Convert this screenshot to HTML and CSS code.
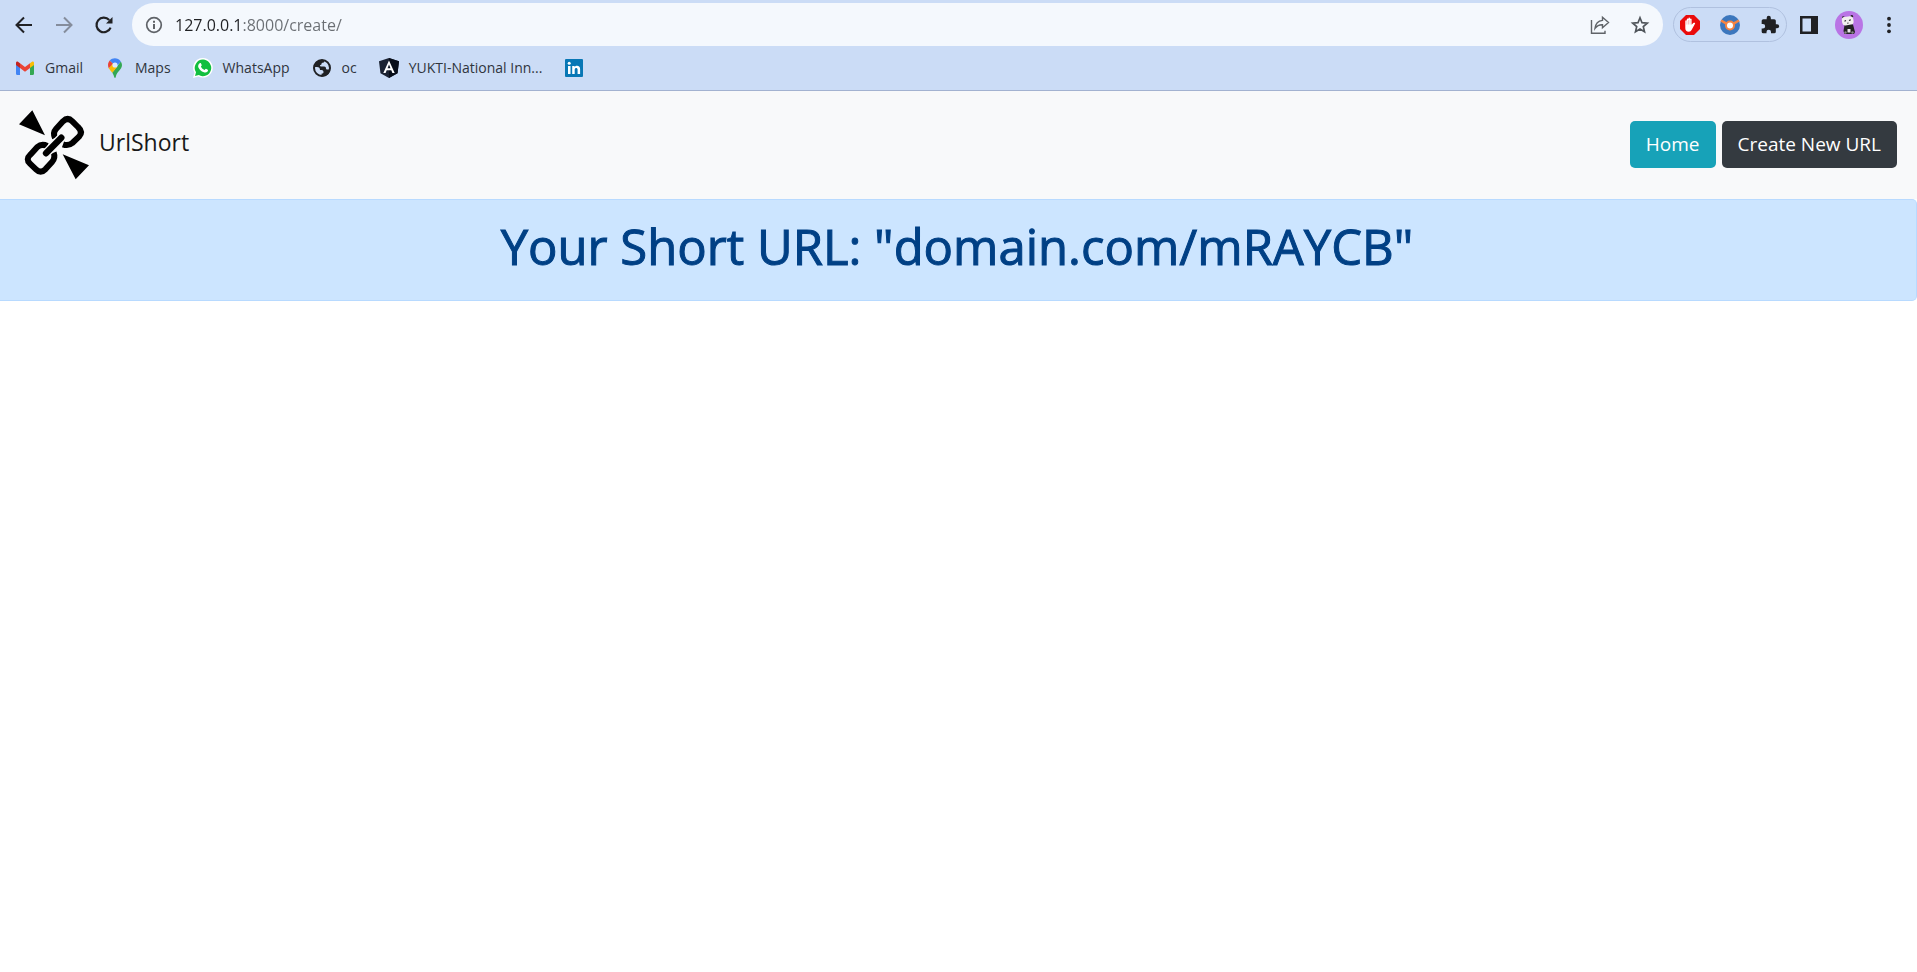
FILE: index.html
```html
<!DOCTYPE html>
<html lang="en">
<head>
<meta charset="utf-8">
<title>UrlShort</title>
<link rel="stylesheet" href="styles.css">
</head>
<body>
<header class="browser">
  <div class="toolbar">
    <div class="nav-buttons">
      <button class="icon-button" aria-label="Back"><svg width="20" height="20" viewBox="0 0 20 20"><path d="M18 10H3M10 2.500 2.500 10l7.500 7.500" fill="none" stroke="#202124" stroke-width="2"/></svg></button>
      <button class="icon-button" aria-label="Forward"><svg width="20" height="20" viewBox="0 0 20 20"><path d="M2 10h15M10 2.500l7.500 7.500-7.500 7.500" fill="none" stroke="#858d9c" stroke-width="2"/></svg></button>
      <button class="icon-button" aria-label="Reload"><svg width="20" height="20" viewBox="0 0 20 20"><path d="M16.600 12.600A7.300 7.300 0 1 1 15.200 5" fill="none" stroke="#202124" stroke-width="2.200"/><path d="M18.500 2v6.500H12z" fill="#202124"/></svg></button>
    </div>
    <div class="address">
      <svg width="18" height="18" viewBox="0 0 18 18"><circle cx="9" cy="9" r="7.300" fill="none" stroke="#5f6368" stroke-width="1.700"/><path d="M8 8h2v5H8zM8 4.700h2v2H8z" fill="#5f6368"/></svg>
      <input class="address-input" type="text" value="127.0.0.1:8000/create/" aria-label="Address">
      <button class="icon-button" aria-label="Share"><svg width="20" height="20" viewBox="0 0 20 20"><path d="M1.500 5v13.300H15v-2.500M12.500 2.200 18.500 7.500l-6 5.300V9.700c-3.500-.2-5.500 1-7.500 3.700.5-4.500 3-7.500 7.500-8z" fill="none" stroke="#5f6368" stroke-width="1.400"/></svg></button>
      <button class="icon-button" aria-label="Bookmark this page"><svg width="20" height="20" viewBox="0 0 20 20"><path d="m10 2.800 2 4.900 5.300.4-4 3.500 1.200 5.200-4.500-2.800-4.500 2.800 1.200-5.200-4-3.500 5.300-.4z" fill="none" stroke="#50555b" stroke-width="1.700"/></svg></button>
    </div>
    <div class="extensions">
      <button class="icon-button" aria-label="Ad blocker"><svg width="20" height="20" viewBox="0 0 20 20"><path d="M6 0h8l6 6v8l-6 6H6l-6-6V6z" fill="#ea0b0b"/><path d="M5.300 10.500V6c0-1.100 1.500-1.100 1.500 0V4.200c0-1.100 1.600-1.100 1.600 0V3.400c0-1.100 1.600-1.100 1.600 0v.9c0-1.100 1.600-1.100 1.600 0v5.500l1.700-1.700c1-.9 2.300-.2 1.700.7l-3.300 6c-.6 1.300-1.500 1.900-2.900 1.900-2.300 0-3.500-1.400-3.500-3.400z" fill="#fff"/><path d="M6.900 6v3.600M8.500 5v4.500M10.100 5v4.500" stroke="#f06a6a" stroke-width=".4"/></svg></button>
      <button class="icon-button" aria-label="Extension"><svg width="20" height="20" viewBox="0 0 20 20"><circle cx="10" cy="10" r="10" fill="#3c77bd"/><path d="M1 5.500 6.500 8.700M19 5.500l-5.500 3.200" stroke="#f58442" stroke-width="2.600"/><circle cx="10" cy="10.500" r="4" fill="#fff" stroke="#f58442" stroke-width="2"/></svg></button>
      <button class="icon-button" aria-label="Extensions"><svg width="20" height="20" viewBox="0 0 24 24"><path d="M20.500 11H19V7a2 2 0 0 0-2-2h-4V3.500a2.500 2.500 0 0 0-5 0V5H4a2 2 0 0 0-2 2v3.800h1.500a2.700 2.700 0 0 1 0 5.400H2V20a2 2 0 0 0 2 2h3.800v-1.500a2.700 2.700 0 0 1 5.400 0V22H17a2 2 0 0 0 2-2v-4h1.500a2.500 2.500 0 0 0 0-5z" fill="#202124"/></svg></button>
    </div>
    <div class="profile-tools">
      <button class="icon-button" aria-label="Side panel"><svg width="20" height="20" viewBox="0 0 20 20"><path d="M1 1h18v18H1zM3.500 3.500v13H12v-13z" fill="#202124" fill-rule="evenodd"/></svg></button>
      <button class="icon-button" aria-label="Profile"><svg width="28" height="28" viewBox="0 0 28 28"><circle cx="14" cy="14" r="14" fill="#b974e5"/><g fill="#222"><circle cx="8.300" cy="6.500" r="1.300"/><circle cx="16.800" cy="5.300" r="1.300"/><path d="M9.500 14q4.500-2 8.500-.5L20 21l-1 2H9.500L8.500 20z"/></g><rect x="7" y="5.500" width="11.500" height="8.500" rx="3" fill="#f2f0ef" transform="rotate(-8 13 10)"/><path d="M12.500 18h3v3.500h-3z" fill="#e9e5ec"/><path d="M9.500 10.200l1.500-.7M14 9.500l1.800-.8M12.300 12.200l1.200-.2" stroke="#222" stroke-width="1.100"/><circle cx="10.500" cy="21.500" r="1.200" fill="#888"/><circle cx="17.500" cy="21.500" r="1.200" fill="#888"/></svg></button>
      <button class="icon-button" aria-label="Menu"><svg width="20" height="20" viewBox="0 0 20 20" fill="#202124"><circle cx="10" cy="3.700" r="1.900"/><circle cx="10" cy="10" r="1.900"/><circle cx="10" cy="16.300" r="1.900"/></svg></button>
    </div>
  </div>
  <nav class="bookmarks" aria-label="Bookmarks">
    <a class="bookmark" href="#"><svg width="20" height="20" viewBox="0 0 20 20"><path d="M1 5v10.500c0 .9.500 1.500 1.300 1.500H5V9z" fill="#4285f4"/><path d="M19 5v10.500c0 .9-.5 1.500-1.300 1.500H15V9z" fill="#34a853"/><path d="M15 5.300 17 3.800c1-.6 2 0 2 1.200V7l-4 3z" fill="#fbbc04"/><path d="M5 5.300 10 9l5-3.700V10l-5 3.800L5 10z" fill="#ea4335"/><path d="M5 5.300 3 3.800C2 3.200 1 3.800 1 5v2l4 3z" fill="#c5221f"/></svg>Gmail</a>
    <a class="bookmark" href="#"><svg width="20" height="20" viewBox="0 0 20 20"><path d="M10 20c-.9 0-1-3-2.800-5.200L15.800 3.500A7 7 0 0 1 17 7c0 4.500-5 6.500-6 11-.2 1.200-.4 2-1 2z" fill="#34a853"/><path d="m3.700 10.200 3.800-4.700 4.700 3.600-5 5.700z" fill="#fbbc04"/><path d="M4.700 2.600 8 5.500l-4.300 4.700C2.400 7.500 2.900 4.700 4.700 2.600z" fill="#ea4335"/><path d="M4.700 2.600C7.500-.7 13-.7 15.800 3.500L12 8 8 5.400z" fill="#4285f4"/><circle cx="10" cy="7" r="2.600" fill="#dceaff"/></svg>Maps</a>
    <a class="bookmark" href="#"><svg width="20" height="20" viewBox="0 0 20 20"><path d="M10 0a9.800 9.800 0 1 1-4.600 18.500L0 20l1.500-5.200A9.800 9.800 0 0 1 10 0z" fill="#fff"/><path d="M10 1.600a8.300 8.300 0 1 1-4.200 15.500L2 18l1-3.700A8.300 8.300 0 0 1 10 1.600z" fill="#12bf3f"/><path d="M6.700 5.200c.4-.4 1.100-.3 1.300.2l.7 1.700c.2.600-.8 1.300-.7 1.700.7 1.500 1.900 2.500 3.400 3.100.5.100 1.100-1.300 1.600-1.100l1.800.9c.4.200.2 1.300-.3 1.900-.8.900-2.300 1.100-3.600.7-2.800-.9-4.700-2.800-5.600-5-.5-1.500.2-3.200 1.400-4.100z" fill="#fff"/></svg>WhatsApp</a>
    <a class="bookmark" href="#"><svg width="20" height="20" viewBox="0 0 20 20"><circle cx="10" cy="10" r="8" fill="#cbdcf6" stroke="#202124" stroke-width="2"/><path d="M2 9C2 5 5 2 10 2c1 0 2 .2 2.500.5-.2 1.300-.3 2-1.500 2.200-1 .1-1.500.3-1.500 1.300 0 .8-.8 1-1.500 1 0 1 .5 1.500 1.500 1.500h2.700c1.200 0 1.800.8 1.800 2 0 .8.600 1 1.500 1H18c0 3-2 6-5.500 6.500-.5.200-2 .4-3 .2v-2.500c1.500 0 2-.5 2-1.700 0-1.300-.8-2-2-2H8c0-1.700-1-3-3-3z" fill="#202124"/></svg>oc</a>
    <a class="bookmark" href="#"><svg width="20" height="20" viewBox="0 0 20 20"><path d="m10 0 10 3.300-1.500 12L10 20l-8.500-4.700L0 3.300z" fill="#1b2232"/><path d="m10 0 10 3.300-1.500 12L10 20z" fill="#080d18"/><path d="M10 2.500 4.300 15h2.300l1.100-2.800h4.600l1.100 2.800h2.300zM8.500 10.200 10 6.600l1.500 3.600z" fill="#fff" fill-rule="evenodd"/></svg>YUKTI-National Inn...</a>
    <a class="bookmark" href="#" aria-label="LinkedIn"><svg width="20" height="20" viewBox="0 0 20 20"><rect x="1" y="1" width="18" height="18" rx="1" fill="#0877b5"/><path d="M4 8h2.500v8H4zM8.200 8h2.400v1.100c1.200-1.900 5.500-1.900 5.500 2V16h-2.500v-4.300c0-2.200-2.900-2-2.900 0V16H8.200z" fill="#fff"/><circle cx="5.200" cy="5.200" r="1.500" fill="#fff"/></svg></a>
  </nav>
</header>
<main>
  <nav class="navbar">
    <a class="brand" href="#">
      <svg class="logo" width="71" height="70" viewBox="58 75 213 210"><path d="m58 118 40-42 38 75zM189 208l79 33-40 42z"/><g fill="none" stroke="#000" stroke-width="18" stroke-linejoin="round"><path d="M166 159Q159 143 169 132L190 109Q204 95 218 109L235 126Q251 141 238 155L218 174Q206 184 190 178"/><path d="M143 183Q126 175 113 186L92 209Q77 223 91 236L109 253Q123 267 137 253L157 231Q168 219 162 203"/></g><path d="m139 205 46-47" stroke="#f8f9fa" stroke-width="27" stroke-linecap="round"/><path d="m139 205 46-47" stroke="#000" stroke-width="19" stroke-linecap="round"/></svg>
      <span class="brand-name">UrlShort</span>
    </a>
    <div class="actions">
      <a class="btn btn-info" href="#">Home</a>
      <a class="btn btn-dark" href="#">Create New URL</a>
    </div>
  </nav>
  <div class="alert" role="alert"><h1 class="alert-title">Your Short URL: "domain.com/mRAYCB"</h1></div>
</main>
</body>
</html>
```
FILE: styles.css
```css
* { box-sizing: border-box; }
body {
  margin: 0;
  background: #fff;
  font-family: "Segoe UI", "Open Sans", "Noto Sans", sans-serif;
}
a { text-decoration: none; }
svg { display: block; flex-shrink: 0; }

.browser {
  background: #cbdcf6;
  border-bottom: 1px solid #a3b2d0;
}
.toolbar {
  display: flex;
  align-items: center;
  padding: 3px 18px 0 14px;
}
.icon-button {
  display: flex;
  padding: 0;
  border: 0;
  background: none;
}
.nav-buttons {
  display: flex;
  gap: 20px;
  margin-right: 18px;
}
.address {
  display: flex;
  flex: 1;
  align-items: center;
  gap: 20px;
  height: 43px;
  padding: 0 13px;
  border-radius: 22px;
  background: #f4f8fd;
}
.address-input {
  flex: 1;
  min-width: 0;
  height: 30px;
  margin-left: -16px;
  padding: 0 0 0 8px;
  border: 0;
  outline: 0;
  background: linear-gradient(90deg, #202124 76px, #6a6e73 76px);
  -webkit-background-clip: text;
  background-clip: text;
  color: transparent;
  font-family: inherit;
  font-size: 16px;
}
.extensions {
  display: flex;
  align-items: center;
  gap: 20px;
  height: 35px;
  margin-left: 10px;
  padding: 0 6px;
  border: 1px solid #b0c1df;
  border-radius: 18px;
}
.profile-tools {
  display: flex;
  align-items: center;
  gap: 16px;
  margin-left: 12px;
}
.bookmarks {
  display: flex;
  align-items: center;
  gap: 22px;
  height: 44px;
  padding: 0 15px;
}
.bookmark {
  display: flex;
  align-items: center;
  gap: 10px;
  color: #30353d;
  font-size: 14px;
  line-height: 20px;
}

.navbar {
  display: flex;
  align-items: center;
  justify-content: space-between;
  padding: 19px 20px 19px 19px;
  background: #f8f9fa;
}
.brand {
  display: flex;
  align-items: center;
  gap: 9px;
  color: #191919;
  font-size: 23px;
  line-height: 32px;
}
.brand-name { padding-bottom: 6px; }
.actions {
  display: flex;
  gap: 6px;
  padding-bottom: 2px;
}
.btn {
  padding: 9px 16px;
  border-radius: 5px;
  color: #fff;
  font-size: 19px;
  line-height: 29px;
}
.btn-info { background: #17a2b8; }
.btn-dark { background: #343a40; }

.alert {
  padding: 16px 27px 24px 25px;
  border: 1px solid #b8daff;
  border-left: 0;
  border-radius: 0 5px 5px 0;
  background: #cce5ff;
  color: #004085;
  text-align: center;
}
.alert-title {
  margin: 0;
  font-size: 49px;
  font-weight: 500;
  line-height: 60px;
  -webkit-text-stroke: 1px #004085;
}
```
